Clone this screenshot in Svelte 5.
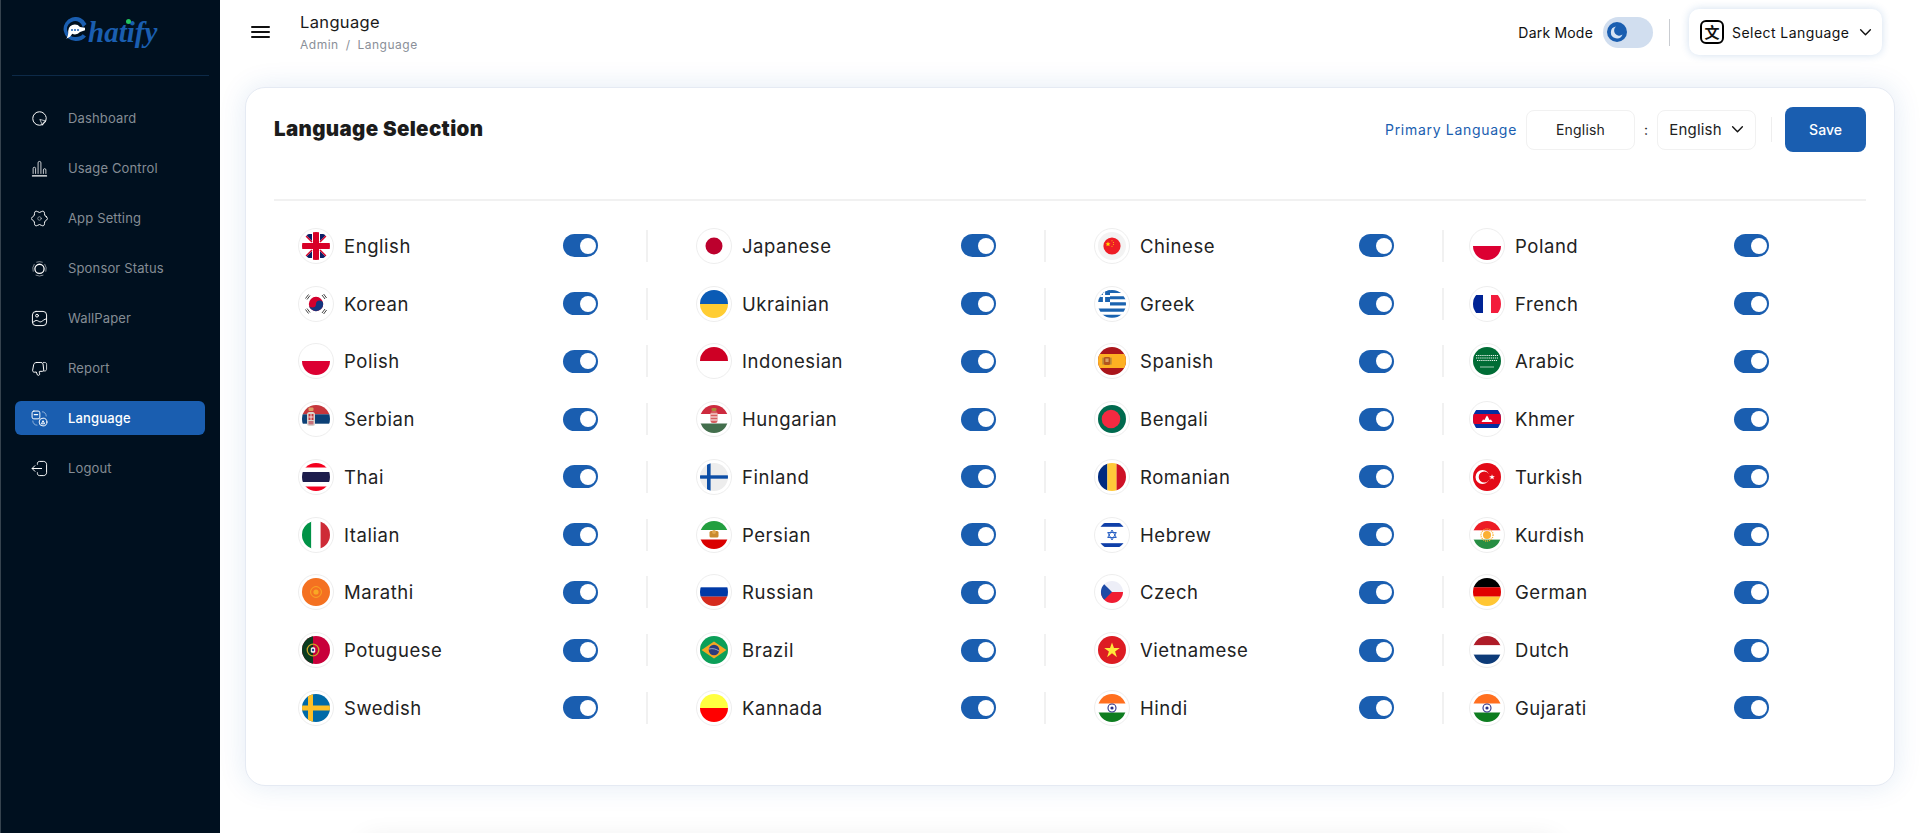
<script>
  const india = `<rect width="28" height="28" fill="#fff"/><rect width="28" height="9.5" fill="#ff6f1f"/><rect y="18.5" width="28" height="9.5" fill="#0e7d20"/><circle cx="14" cy="14" r="4" fill="#fff" stroke="#2b2f86" stroke-width="1.1"/><circle cx="14" cy="14" r="1.6" fill="#2b2f86"/>`;
  const poland = `<rect width="28" height="28" fill="#fff"/><rect y="14" width="28" height="14" fill="#dc0032"/>`;
  const tri = (c1, c2, c3) => `<rect width="28" height="9.4" fill="${c1}"/><rect y="9.3" width="28" height="9.4" fill="${c2}"/><rect y="18.6" width="28" height="9.4" fill="${c3}"/>`;
  const triV = (c1, c2, c3) => `<rect width="9.4" height="28" fill="${c1}"/><rect x="9.3" width="9.4" height="28" fill="${c2}"/><rect x="18.6" width="9.4" height="28" fill="${c3}"/>`;

  const flags = {
    English: `<rect width="28" height="28" fill="#fff"/><path d="M3 2h7v7zM18 2h7l-7 7zM3 26h7v-7zM25 26h-7v-7z" fill="#0b1f66"/><path d="M0 0l10 10M28 0L18 10M0 28l10-10M28 28L18 18" stroke="#d80027" stroke-width="1.4"/><rect x="11" width="6" height="28" fill="#d80027"/><rect y="11" width="28" height="6" fill="#d80027"/>`,
    Japanese: `<rect width="28" height="28" fill="#fff"/><circle cx="14" cy="14" r="8.5" fill="#bc002d"/>`,
    Chinese: `<rect width="28" height="28" fill="#f3f3f3"/><circle cx="14" cy="14" r="8.6" fill="#ee1c25"/><path d="M10 9.5l.7 1.8 1.8.1-1.4 1.1.5 1.8-1.6-1-1.6 1 .5-1.8-1.4-1.1 1.8-.1z" fill="#ffde00"/><circle cx="14" cy="8.8" r=".5" fill="#ffde00"/><circle cx="15.4" cy="10.4" r=".5" fill="#ffde00"/><circle cx="15.4" cy="12.6" r=".5" fill="#ffde00"/><circle cx="14" cy="14.2" r=".5" fill="#ffde00"/>`,
    Poland: poland,
    Korean: `<rect width="28" height="28" fill="#fff"/><circle cx="14" cy="14" r="7.2" fill="#d3002d"/><path d="M6.8 14a3.6 3.6 0 0 0 7.2 0a3.6 3.6 0 0 1 7.2 0a7.2 7.2 0 0 1-14.4 0z" fill="#14357e"/><path d="M3.5 8.5l3-4M5 9.5l3-4M20 5l3 4M21.6 4l3 4M3.5 19.5l3 4M5 18.5l3 4M20 23l3-4M21.6 24l3-4" stroke="#444" stroke-width="1"/>`,
    Ukrainian: `<rect width="28" height="14" fill="#0a5bb5"/><rect y="14" width="28" height="14" fill="#ffcd33"/>`,
    Greek: `<rect width="28" height="28" fill="#fff"/><path d="M0 1.5h28M12 7.7h16M12 13.9h16M0 20.1h28M0 26.3h28" stroke="#1a63b0" stroke-width="3.1"/><rect width="12" height="12" fill="#1a63b0"/><path d="M6 0v12M0 6h12" stroke="#fff" stroke-width="2.2"/>`,
    French: `<rect width="28" height="28" fill="#fff"/><rect y="5" width="10" height="18" fill="#002395"/><rect x="18" y="5" width="10" height="18" fill="#f31c3c"/>`,
    Polish: poland,
    Indonesian: `<rect width="28" height="28" fill="#fff"/><rect width="28" height="14" fill="#ce0025"/>`,
    Spanish: `<rect width="28" height="28" fill="#aa151b"/><rect y="7" width="28" height="14" fill="#fdb022"/><rect x="6" y="10" width="6" height="8" rx="1" fill="#b3541e"/><rect x="7.4" y="11.5" width="3.2" height="3.5" fill="#d9a066"/><rect x="4.6" y="10.6" width="1" height="7" fill="#8a6a4a"/><rect x="12.4" y="10.6" width="1" height="7" fill="#8a6a4a"/>`,
    Arabic: `<rect width="28" height="28" fill="#006c35"/><path d="M3 8.500h22M3 11h22M4 13.500h20" stroke="#e8f3ec" stroke-width="1.200" stroke-dasharray="1.300 .8"/><path d="M7 20h14" stroke="#e8f3ec" stroke-width=".7"/>`,
    Serbian: `<rect width="28" height="28" fill="#fff"/><rect width="28" height="9.4" fill="#c6363c"/><rect y="9.3" width="28" height="9.4" fill="#0c4076"/><rect x="5" y="7" width="8" height="14" rx="2.5" fill="#d9d2cc"/><rect x="6.5" y="9" width="5" height="6" fill="#c6363c"/><path d="M9 9v6M6.5 12h5" stroke="#fff" stroke-width=".8"/><rect x="6.5" y="2.5" width="5" height="3.5" rx="1" fill="#d9a066"/><rect x="6.5" y="16" width="5" height="3.5" fill="#c6707a"/>`,
    Hungarian: `<rect width="28" height="28" fill="#fff"/><rect width="28" height="9" fill="#cd2a3e"/><rect y="18.5" width="28" height="9.5" fill="#436f4d"/><rect x="10.5" y="6" width="7" height="12" rx="2.5" fill="#d65f5f"/><path d="M10.5 9h7M10.5 12h7M10.5 15h7" stroke="#fff" stroke-width="1.1"/><rect x="11.5" y="3" width="5" height="3" rx="1" fill="#a98a3a"/>`,
    Bengali: `<rect width="28" height="28" fill="#006a4e"/><circle cx="13" cy="14" r="9.3" fill="#f42a41"/>`,
    Khmer: `<rect width="28" height="28" fill="#fff"/><rect y="5" width="28" height="18" rx="1.5" fill="#032ea1"/><rect y="9" width="28" height="10" fill="#e00025"/><path d="M8.5 17l1.5-2.5 1.5.5 1.5-3 1-1.5 1 1.5 1.5 3 1.5-.5 1.5 2.5z" fill="#fff"/>`,
    Thai: `<rect width="28" height="28" fill="#fff"/><rect width="28" height="4.5" fill="#f4001e"/><rect y="23.5" width="28" height="4.5" fill="#f4001e"/><rect y="9" width="28" height="10" fill="#1d1d4c"/>`,
    Finland: `<rect width="28" height="28" fill="#ededed"/><rect x="7" width="3.6" height="28" fill="#0d4ea6"/><rect y="12.3" width="28" height="3.4" fill="#0d4ea6"/>`,
    Romanian: triV('#002b7f', '#ffc93a', '#ce1126'),
    Turkish: `<rect width="28" height="28" fill="#e30a17"/><circle cx="9.5" cy="14" r="7" fill="#fff"/><circle cx="11.3" cy="14" r="5.6" fill="#e30a17"/><path d="M19 11.3l.8 1.9 2-.1-1.5 1.3.5 2-1.8-1.1-1.7 1.1.5-2-1.6-1.3 2.1.1z" fill="#fff"/>`,
    Italian: triV('#009246', '#fff', '#ce2b37'),
    Persian: `<rect width="28" height="28" fill="#fff"/><rect width="28" height="9" fill="#239f40"/><rect y="18.5" width="28" height="9.5" fill="#da0000"/><rect x="9.5" y="10" width="9" height="6.5" rx="1.5" fill="#c98a2e"/><circle cx="14" cy="11" r="2" fill="#e0a850"/>`,
    Hebrew: `<rect width="28" height="28" fill="#fff"/><rect y="2" width="28" height="3.8" fill="#0f3fa8"/><rect y="22.2" width="28" height="3.8" fill="#0f3fa8"/><path d="M14 9l4.3 7.5h-8.6zM14 19l-4.3-7.5h8.6z" fill="none" stroke="#2b62c4" stroke-width="1"/>`,
    Kurdish: `<rect width="28" height="28" fill="#fff"/><rect width="28" height="9.3" fill="#ed1c24"/><rect y="18.6" width="28" height="9.4" fill="#278e43"/><circle cx="14" cy="14" r="4" fill="#fbb034"/><circle cx="14" cy="14" r="6" fill="none" stroke="#fbb034" stroke-width="1.4" stroke-dasharray="1 1"/>`,
    Marathi: `<rect width="28" height="28" fill="#f47121"/><circle cx="14" cy="14" r="5.4" fill="none" stroke="#f9a825" stroke-width="1"/><circle cx="14" cy="14" r="2.6" fill="#f9a825"/>`,
    Russian: tri('#fff', '#0039a6', '#d52b1e'),
    Czech: `<rect width="28" height="28" fill="#fff"/><path d="M3 14a11 11 0 0 1 22 0z" fill="#edeef7"/><path d="M3 14a11 11 0 0 0 22 0z" fill="#f01c32"/><path d="M6.2 6.2L14 14l-7.800 7.800A11 11 0 0 1 6.200 6.200z" fill="#1c4aa6"/>`,
    German: tri('#000', '#e00000', '#ffc633'),
    Potuguese: `<rect width="28" height="28" fill="#c8003a"/><rect width="11" height="28" fill="#0a3b1f"/><circle cx="11" cy="14" r="5.800" fill="none" stroke="#c9a227" stroke-width="1.300"/><rect x="8.800" y="11.300" width="4.400" height="5.400" rx="1.500" fill="#f3f3f3"/><circle cx="11" cy="14" r="1.200" fill="#24408e"/>`,
    Brazil: `<rect width="28" height="28" fill="#0c9f58"/><path d="M1.500 14L14 5.500 26.500 14 14 22.500z" fill="#f5a623"/><circle cx="14" cy="14" r="5.300" fill="#2c3c7c"/><path d="M9 13c4-1 7 0 10 2" stroke="#cdd2e6" stroke-width=".7" fill="none"/>`,
    Vietnamese: `<rect width="28" height="28" fill="#dd1c23"/><path d="M14 6.500l2 5.500h5.800l-4.700 3.500 1.800 5.700L14 17.300l-4.900 3.900 1.800-5.700L6.200 12H12z" fill="#ffe93b"/>`,
    Dutch: tri('#ae1c28', '#fff', '#0d3b78'),
    Swedish: `<rect width="28" height="28" fill="#006aa7"/><rect x="6" width="5" height="28" fill="#fdbf26"/><rect y="11.500" width="28" height="5" fill="#fdbf26"/>`,
    Kannada: `<rect width="28" height="14" fill="#ffff40"/><rect y="14" width="28" height="14" fill="#f00"/>`,
    Hindi: india,
    Gujarati: india
  };

  const rows = [
    ['English', 'Japanese', 'Chinese', 'Poland'],
    ['Korean', 'Ukrainian', 'Greek', 'French'],
    ['Polish', 'Indonesian', 'Spanish', 'Arabic'],
    ['Serbian', 'Hungarian', 'Bengali', 'Khmer'],
    ['Thai', 'Finland', 'Romanian', 'Turkish'],
    ['Italian', 'Persian', 'Hebrew', 'Kurdish'],
    ['Marathi', 'Russian', 'Czech', 'German'],
    ['Potuguese', 'Brazil', 'Vietnamese', 'Dutch'],
    ['Swedish', 'Kannada', 'Hindi', 'Gujarati']
  ];
  const languages = rows.flat();

  // Six-lobed gear outline: control points alternate between a lobe and a valley.
  const polar = (deg, r) => {
    const a = (deg * Math.PI) / 180;
    return `${(12 + r * Math.cos(a)).toFixed(2)} ${(12 + r * Math.sin(a)).toFixed(2)}`;
  };
  let gear = `M${polar(-15, 10)}`;
  for (let k = 0; k < 12; k++) {
    gear += `Q${polar(k * 30, k % 2 ? 7.4 : 13.6)} ${polar(k * 30 + 15, 10)}`;
  }

  const menu = [
    { label: 'Dashboard', icon: `<path d="M21.500 12A9.500 9.500 0 1 1 12 2.500a9.500 9.500 0 0 1 9.500 8"/><path d="M13 13.500l8 2-3.500 2-1 3.500z" stroke-opacity=".7"/>` },
    { label: 'Usage Control', icon: `<path d="M2 22.500h20" stroke-width="1.600"/><path d="M3 19v-7a1.500 1.500 0 0 1 3.500 0v7M10 19V4a2 2 0 0 1 4 0v15M17.500 19v-5a1.700 1.700 0 0 1 3.500 0v5" stroke-opacity=".8"/>` },
    { label: 'App Setting', icon: `<path d="${gear}Z"/><circle cx="12" cy="12" r="2.500" stroke-opacity=".45"/>` },
    { label: 'Sponsor Status', icon: `<circle cx="12" cy="12.500" r="6.500" stroke-width="1.800"/><path d="M4.500 6a11 11 0 0 0-1.500 10M7 21.500a11 11 0 0 0 10 0M21 16a11 11 0 0 0-1.500-10M16 3a11 11 0 0 0-8 0" stroke-opacity=".5"/>` },
    { label: 'WallPaper', icon: `<rect x="2" y="2" width="20" height="20" rx="5"/><circle cx="8.500" cy="8" r="2"/><path d="M2.500 17.500c2.500-1.500 4-3.500 6.500-2.500 2 .800 3.500 2.500 5.500 1.500 2.500-1.300 4-3.500 7-4"/>` },
    { label: 'Report', icon: `<path d="M8 3.500h6c1.500 0 2.500.800 3 2l1 9c0 .800-.800 1.500-2 1.500h-3.500c-.8 0-1 .500-.800 1.200l.5 2.300c.2 1.500-1 2.500-2.200 2L9 21l-1.500-4-3 .2C3 17 2 16 2.300 14.500l1.500-8C4.200 4.500 6 3.500 8 3.500z"/><path d="M17.500 3.500h2c1.500 0 2.500 1 2.500 2.500v7c0 1.500-1 2.500-2.500 2.500H18" stroke-opacity=".8"/>` },
    { label: 'Language', active: true, icon: `<rect x="1.500" y="1.500" width="11" height="11" rx="2.500"/><path d="M4.500 6.500h5" stroke-width="1.600"/><circle cx="17" cy="17" r="5.500"/><path d="M15 19l2-4 2 4z"/><path d="M16 2.500c3 0 5.500 2.500 5.500 6M2.500 15.500c0 3 2.500 6 6 6" stroke-opacity=".5"/>` },
    { label: 'Logout', icon: `<path d="M9 6V5c0-1.700 1.300-3 3-3h6c2 0 4 2 4 4v12c0 2-2 4-4 4h-6c-1.700 0-3-1.300-3-3v-1"/><path d="M15 12H2M5.500 8L1.500 12l4 4"/>` }
  ];
</script>

<div class="app">
  <aside class="sidebar">
    <div class="logo">
      <svg class="logo-mark" viewBox="0 0 24 28" width="24" height="28">
        <path d="M23.500 7A12 12 0 1 0 13 24c4 0 7.500-1.500 10-4.500l-3.300-2.300c-1.500 1.700-3.700 2.800-6.700 2.800A8 8 0 1 1 19.800 10.200z" fill="#1a5eb0"/>
        <path d="M12 7.500a6.500 6.500 0 0 1 5 2.400l5 .8v2.600l-5 1.700a6.500 6.500 0 0 1-5 2.500c-1 0-2-.200-2.800-.7-1 2.200-3.200 4-6 5 1.300-1.800 2-4 2-6.300V14a6.500 6.500 0 0 1 6.800-6.500z" fill="#fff"/>
        <circle cx="9" cy="13" r="1" fill="#1a5eb0"/><circle cx="12" cy="13" r="1" fill="#1a5eb0"/><circle cx="15" cy="13" r="1" fill="#1a5eb0"/>
      </svg>
      <span class="logo-text">hatify</span>
      <i class="logo-dot"></i>
    </div>
    <div class="side-rule"></div>
    <nav class="menu">
      {#each menu as item}
        <div class="menu-item" class:active={item.active}>
          <svg class="menu-icon" viewBox="0 0 24 24" width="17" height="17" fill="none" stroke="#fff" stroke-width="1.400" stroke-linecap="round" stroke-linejoin="round">{@html item.icon}</svg>
          <span>{item.label}</span>
        </div>
      {/each}
    </nav>
  </aside>

  <main class="main">
    <header class="topbar">
      <div class="burger"><span></span><span></span><span></span></div>
      <div class="crumbs">
        <div class="crumb-title">Language</div>
        <div class="crumb-path">Admin<b>/</b>Language</div>
      </div>
      <div class="top-right">
        <span class="dark-label">Dark Mode</span>
        <div class="dark-toggle">
          <svg viewBox="0 0 20 20" width="20" height="20">
            <circle cx="10" cy="10" r="10" fill="#1a5eb0"/>
            <path d="M9 4.500a6 6 0 1 0 6.500 8A5 5 0 0 1 9 4.500z" fill="#d6e3f3"/>
          </svg>
        </div>
        <div class="top-rule"></div>
        <div class="lang-select">
          <span class="lang-icon">文</span>
          <span class="lang-text">Select Language</span>
          <svg class="chev" viewBox="0 0 12 8" width="13" height="9" fill="none" stroke="#111" stroke-width="1.300" stroke-linecap="round" stroke-linejoin="round"><path d="M1.500 1.500L6 6l4.500-4.500"/></svg>
        </div>
      </div>
    </header>

    <section class="card">
      <div class="card-head">
        <h1>Language Selection</h1>
        <div class="head-tools">
          <span class="primary">Primary Language</span>
          <div class="box box-input">English</div>
          <span class="colon">:</span>
          <div class="box box-select">
            <span>English</span>
            <svg viewBox="0 0 12 8" width="13" height="9" fill="none" stroke="#111" stroke-width="1.300" stroke-linecap="round" stroke-linejoin="round"><path d="M1.500 1.500L6 6l4.500-4.500"/></svg>
          </div>
          <div class="tool-rule"></div>
          <button class="save">Save</button>
        </div>
      </div>
      <div class="grid">
        {#each languages as lang}
          <div class="cell">
            <div class="flag">
              <svg viewBox="0 0 28 28" width="28" height="28">{@html flags[lang]}</svg>
            </div>
            <span class="name">{lang}</span>
            <div class="switch"><i></i></div>
            <div class="cell-rule"></div>
          </div>
        {/each}
      </div>
    </section>
    <div class="foot"></div>
  </main>
</div>

<style>
  :global(body) {
    margin: 0;
    background: #fff;
    overflow: hidden;
  }
  .app {
    display: flex;
    width: 1920px;
    height: 833px;
    overflow: hidden;
    font-family: Inter, "Noto Sans", sans-serif;
    color: #111;
  }
  .sidebar {
    flex: 0 0 220px;
    box-sizing: border-box;
    border-left: 1px solid #36434e;
    background: #00101f;
    display: flex;
    flex-direction: column;
  }
  .logo {
    position: relative;
    height: 75px;
    display: flex;
    align-items: flex-start;
    padding: 17px 0 0 62px;
    box-sizing: border-box;
  }
  .logo-text {
    font-family: "Liberation Serif", serif;
    font-style: italic;
    font-weight: 700;
    font-size: 29px;
    line-height: 30px;
    color: #1a5eb0;
    margin-left: 1px;
  }
  .logo-dot {
    position: absolute;
    left: 125px;
    top: 19px;
    width: 5px;
    height: 5px;
    border-radius: 50%;
    background: #22c55e;
  }
  .side-rule {
    height: 1px;
    margin: 0 11px;
    background: #0d2a48;
  }
  .menu {
    margin-top: 25px;
    padding: 0 15px 0 14px;
    display: flex;
    flex-direction: column;
    gap: 16px;
  }
  .menu-item {
    height: 34px;
    display: flex;
    align-items: center;
    padding-left: 16px;
    border-radius: 6px;
    font-size: 13px;
    letter-spacing: 0.15px;
    color: #858d95;
  }
  .menu-item span {
    margin-left: 20px;
  }
  .menu-item.active {
    background: #1a5eb0;
    color: #fff;
    font-weight: 500;
  }
  .main {
    flex: 1;
    min-width: 0;
    display: flex;
    flex-direction: column;
  }
  .topbar {
    height: 87px;
    flex: none;
    display: flex;
    align-items: flex-start;
    box-sizing: border-box;
  }
  .burger {
    margin: 26px 0 0 31px;
    width: 19px;
    display: flex;
    flex-direction: column;
    gap: 3px;
  }
  .burger span {
    height: 2px;
    background: #111;
    border-radius: 1px;
  }
  .crumbs {
    margin: 11px 0 0 30px;
  }
  .crumb-title {
    font-size: 16.5px;
    line-height: 22px;
    letter-spacing: 0.35px;
    color: #1a1a1a;
  }
  .crumb-path {
    margin-top: 2px;
    font-size: 12px;
    line-height: 20px;
    letter-spacing: 0.5px;
    color: #8a8f98;
  }
  .crumb-path b {
    font-weight: 400;
    margin: 0 7px;
  }
  .top-right {
    margin-left: auto;
    margin-right: 38px;
    margin-top: 9px;
    height: 46px;
    display: flex;
    align-items: center;
  }
  .dark-label {
    font-size: 14px;
    letter-spacing: 0.2px;
    color: #111;
  }
  .dark-toggle {
    margin-left: 10px;
    width: 50px;
    height: 31px;
    border-radius: 16px;
    background: #d1deef;
    display: flex;
    align-items: center;
    padding-left: 4px;
    box-sizing: border-box;
  }
  .top-rule {
    width: 1px;
    height: 27px;
    margin: 0 19px 0 16px;
    background: #c9ccd1;
  }
  .lang-select {
    width: 193px;
    height: 46px;
    box-sizing: border-box;
    border-radius: 10px;
    background: #fff;
    box-shadow: 0 0 8px rgba(26, 94, 176, 0.2);
    display: flex;
    align-items: center;
    padding-left: 11px;
  }
  .lang-icon {
    flex: none;
    width: 24px;
    height: 24px;
    box-sizing: border-box;
    border: 2px solid #000;
    border-radius: 6px;
    font-family: "Noto Sans CJK SC", sans-serif;
    font-size: 15px;
    font-weight: 700;
    line-height: 19px;
    text-align: center;
  }
  .lang-text {
    margin-left: 8px;
    font-size: 14px;
    letter-spacing: 0.45px;
    white-space: nowrap;
    color: #111;
  }
  .chev {
    margin-left: 9px;
  }
  .card {
    flex: none;
    box-sizing: border-box;
    height: 699px;
    margin: 0 25px;
    padding: 19px 28px 0;
    background: #fff;
    border: 1px solid #e5eaf3;
    border-radius: 20px;
    box-shadow: 0 0 28px rgba(26, 94, 176, 0.12);
  }
  .card-head {
    height: 45px;
    padding-bottom: 47px;
    border-bottom: 2px solid #f1f1f1;
    display: flex;
    justify-content: space-between;
    align-items: flex-start;
  }
  h1 {
    margin: 10px 0 0;
    font-size: 20.5px;
    line-height: 24px;
    font-weight: 900;
    letter-spacing: 0.35px;
    white-space: nowrap;
    color: #1c1c1c;
  }
  .head-tools {
    display: flex;
    align-items: center;
    height: 45px;
  }
  .primary {
    font-size: 14px;
    letter-spacing: 0.7px;
    white-space: nowrap;
    color: #1a5eb0;
  }
  .box {
    height: 40px;
    box-sizing: border-box;
    border: 1px solid #f1f1f1;
    border-radius: 8px;
    display: flex;
    align-items: center;
    font-size: 14px;
    letter-spacing: 0.2px;
    color: #222;
  }
  .box-input {
    margin-left: 9px;
    width: 109px;
    justify-content: center;
  }
  .colon {
    width: 22px;
    text-align: center;
    font-size: 14px;
    color: #222;
  }
  .box-select {
    width: 99px;
    justify-content: center;
    gap: 9px;
    font-size: 15px;
  }
  .tool-rule {
    width: 1px;
    height: 25px;
    margin: 0 13px 0 15px;
    background: #eeeeee;
  }
  .save {
    width: 81px;
    height: 45px;
    border: 0;
    border-radius: 8px;
    background: #1a5eb0;
    color: #fff;
    font-family: inherit;
    font-size: 14px;
    font-weight: 500;
  }
  .grid {
    margin-top: 16px;
    padding-left: 24px;
    display: grid;
    grid-template-columns: 398px 398px 375px 1fr;
    grid-auto-rows: 57.75px;
  }
  .cell {
    width: 350px;
    display: flex;
    align-items: center;
  }
  .flag {
    flex: none;
    width: 36px;
    height: 36px;
    box-sizing: border-box;
    border: 1px solid #eeeeee;
    border-radius: 50%;
    display: flex;
    align-items: center;
    justify-content: center;
    background: #fff;
  }
  .flag svg {
    display: block;
    border-radius: 50%;
  }
  .name {
    flex: 1;
    margin-left: 10px;
    font-size: 18.5px;
    letter-spacing: 0.55px;
    color: #222;
  }
  .switch {
    position: relative;
    flex: none;
    width: 35px;
    height: 23px;
    margin-right: 48px;
    border-radius: 12px;
    background: #1a5eb0;
  }
  .switch i {
    position: absolute;
    top: 3.5px;
    right: 2px;
    width: 16px;
    height: 16px;
    border-radius: 50%;
    background: #fff;
  }
  .cell-rule {
    flex: none;
    width: 2px;
    height: 32px;
    background: #f1f1f1;
  }
  .cell:nth-child(4n) .cell-rule {
    visibility: hidden;
  }
  .foot {
    flex: none;
    width: 1190px;
    height: 40px;
    margin: 54px 0 0 145px;
    box-shadow: 0 0 28px rgba(0, 0, 0, 0.09);
  }
</style>
